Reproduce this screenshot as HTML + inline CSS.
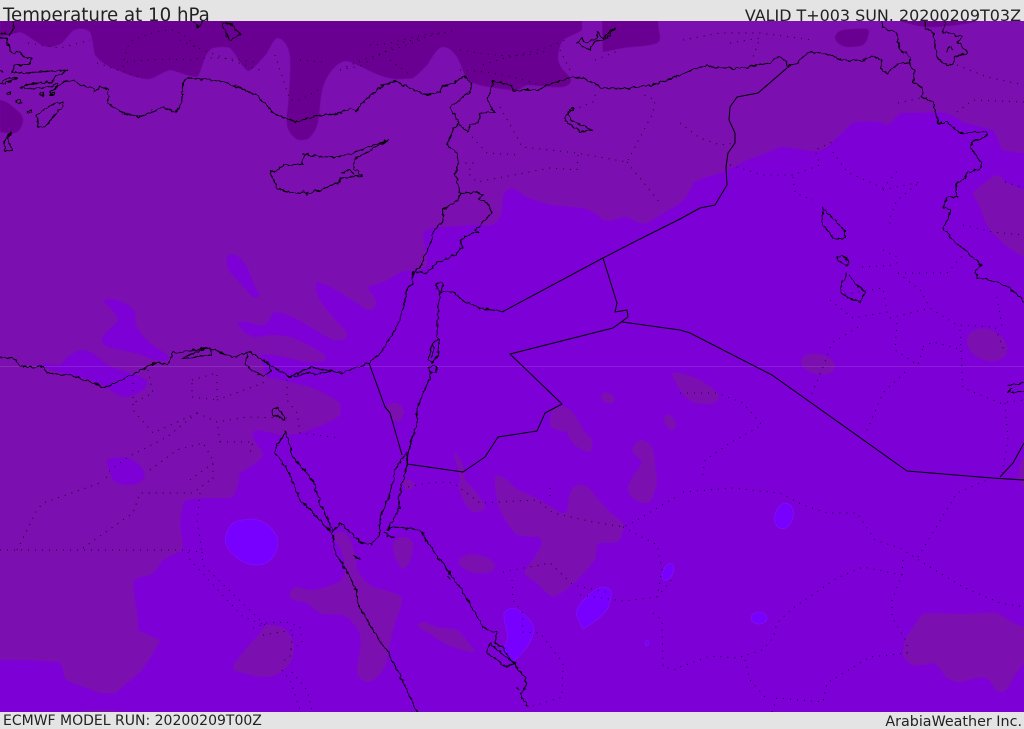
<!DOCTYPE html>
<html><head><meta charset="utf-8"><title>Temperature at 10 hPa</title>
<style>
html,body{margin:0;padding:0;background:#e4e4e4;width:1024px;height:729px;overflow:hidden}
svg{display:block}
text{font-family:"DejaVu Sans",sans-serif;fill:#222}
</style></head><body>
<svg width="1024" height="729" viewBox="0 0 1024 729" xmlns="http://www.w3.org/2000/svg">
<defs><filter id="w" x="-5%" y="-5%" width="110%" height="110%"><feTurbulence type="fractalNoise" baseFrequency="0.22" numOctaves="2" seed="4"/><feDisplacementMap in="SourceGraphic" scale="4.5" xChannelSelector="R" yChannelSelector="G"/></filter></defs>
<rect width="1024" height="729" fill="#e4e4e4"/>
<text x="3" y="21" font-size="18.2">Temperature at 10 hPa</text>
<text x="1021" y="21" font-size="15.95" text-anchor="end">VALID T+003 SUN. 20200209T03Z</text>
<text x="3" y="725" font-size="14">ECMWF MODEL RUN: 20200209T00Z</text>
<text x="1022" y="726" font-size="14.3" text-anchor="end">ArabiaWeather Inc.</text>
<svg x="0" y="21" width="1024" height="691" viewBox="0 21 1024 691">
<rect x="0" y="21" width="1024" height="691" fill="#7d00d7"/>
<!-- light purple -->
<g fill="#7b0faf" stroke="#7f0cbe" stroke-width=".6">
<path d="M0 21H1024V153L1002 150C998 140 996 133 993 130L963 122C955 116 948 113 940 112L900 113C895 118 892 123 887 125C882 122 878 121 873 121L853 122C848 128 843 132 837 137C830 147 822 151 813 151C802 150 790 146 780 147C770 151 758 157 747 160L723 172C712 176 700 178 693 183C690 190 688 196 680 203L657 217C650 222 645 224 640 223C634 221 628 216 623 217C617 219 610 222 603 220C596 212 590 210 583 208C570 206 556 206 547 204C540 202 533 199 527 197C520 193 515 187 510 188C504 192 503 195 503 197C502 205 502 212 500 217C497 222 494 225 490 225H473L440 227C432 228 426 229 423 233C424 245 427 255 427 265C424 270 418 270 413 270L400 272C394 276 387 281 380 283C374 285 369 285 368 288C369 292 376 297 376 303C375 308 373 310 370 310C365 310 361 306 357 303L340 292C333 288 322 282 317 282C314 286 317 292 318 297C322 305 329 312 335 320C341 327 347 330 347 335C347 340 342 340 333 340C318 332 305 323 293 317C285 314 278 311 273 312C270 318 269 324 263 325C255 325 245 320 237 322C240 329 247 335 253 337C260 338 266 335 273 335C281 335 287 337 293 338C302 342 311 346 317 350C322 353 327 356 325 360C315 364 302 362 290 358C280 356 268 353 260 355C262 362 264 370 267 377C280 380 295 383 310 387C320 391 330 396 340 403V415C330 423 312 429 300 433L287 435C278 436 266 430 257 430C253 431 252 432 253 437C255 443 260 448 263 453C262 460 250 467 240 473C238 482 238 494 230 498H200C190 499 185 500 183 503C182 510 180 516 180 523C180 532 183 541 183 550C177 553 170 555 163 560C158 566 156 571 153 573C148 576 140 577 137 578C133 581 133 584 133 587C134 596 136 604 137 613L138 630C143 634 153 636 160 640C155 650 148 662 140 672L115 693H100L66 680C63 675 64 667 60 662L30 660H0Z"/>
<path d="M1024 190L1005 182C1002 178 1000 175 997 175C990 178 982 184 973 193C975 198 980 205 982 213C985 222 988 228 993 233C1000 240 1010 250 1024 257Z"/>
<path d="M290 593C293 588 295 587 297 587C302 588 306 590 310 590C320 590 330 586 340 582C344 578 346 572 345 565C344 558 342 553 340 548C338 544 333 538 335 534C340 531 345 532 347 535C352 540 355 552 357 570C362 578 367 584 373 587C380 590 388 590 393 593C398 594 402 596 402 600C401 608 399 612 397 617C394 625 392 634 390 643C388 652 387 660 385 667C380 675 373 682 367 682C360 680 357 675 357 670C358 660 361 650 361 640C360 632 357 626 353 623C349 618 345 616 340 614C334 614 327 615 320 613C315 610 311 606 307 603C302 600 297 602 293 600C290 597 289 595 290 593Z"/>
<path d="M233 667C238 658 248 646 257 637C260 633 263 627 267 625C274 625 280 626 283 628C288 632 292 637 293 643C294 650 293 658 290 663C285 670 275 677 267 677C258 677 248 674 240 672C236 671 233 670 233 667Z"/>
<path d="M393 543C395 539 399 537 403 537C409 537 413 541 413 545C413 550 412 555 410 560C408 565 405 569 402 569C399 565 397 561 395 557C394 552 393 547 393 543Z"/>
<path d="M418 625C420 622 421 622 423 622C428 623 434 627 440 628C446 629 452 628 457 630C464 636 470 645 475 652C468 652 460 649 453 647C445 644 435 637 427 632C423 630 419 628 418 625Z"/>
<ellipse cx="477" cy="564" rx="18" ry="9" transform="rotate(10 477 564)"/>
<path d="M455 453C458 455 462 462 463 467C464 472 465 476 465 480C468 483 470 485 472 487C478 494 483 501 486 508C482 511 477 512 473 512C467 508 464 502 462 497C460 492 458 486 460 480C460 475 458 468 456 462C455 459 454 456 455 453Z"/>
<path d="M495 480C495 477 496 475 497 475C501 476 504 478 507 480C512 485 517 490 523 492C536 498 550 505 560 513C565 514 568 512 568 507C568 502 569 497 570 493C572 488 576 485 580 485C586 485 590 488 593 493C602 505 612 515 623 523C624 531 622 537 617 542C610 543 604 542 598 543C596 548 596 554 595 560C585 572 570 590 553 597C547 594 542 588 537 583C532 579 527 577 524 573C528 565 538 555 542 543C542 539 540 537 537 537L517 535C510 528 505 520 500 510C497 502 495 490 495 480Z"/>
<path d="M633 447C636 442 639 440 642 440C647 441 651 445 653 450C655 456 655 462 655 467C655 472 657 475 657 478C657 483 656 487 655 490C653 497 650 502 647 503C642 503 637 501 633 498C630 495 628 491 628 488C629 483 631 481 632 478C635 473 640 469 642 463C641 459 636 456 633 453Z"/>
<path d="M562 406C566 407 570 410 573 413C577 418 580 424 583 430C586 434 590 437 592 440C593 444 592 448 590 452C585 452 578 448 573 443C570 439 568 435 567 432C562 431 557 430 553 428C551 427 550 425 550 423C550 418 551 413 552 410Z"/>
<path d="M387 405C391 403 394 403 397 403C400 405 403 408 404 412C403 416 401 420 398 422C394 422 392 419 390 415C388 412 387 408 387 405Z"/>
<path d="M402 480H410C413 481 414 485 413 487C411 490 407 490 405 489Z"/>
<ellipse cx="608" cy="398" rx="7" ry="5" transform="rotate(25 608 398)"/>
<ellipse cx="670" cy="422" rx="5" ry="8" transform="rotate(-30 670 422)"/>
<path d="M672 373L680 373C688 375 694 377 700 380C707 384 714 389 719 395C719 399 717 402 713 403C706 404 699 404 693 402C687 399 683 395 680 390C677 385 674 379 672 373Z"/>
<ellipse cx="818" cy="364" rx="17" ry="10" transform="rotate(12 818 364)"/>
<ellipse cx="987" cy="345" rx="21" ry="15" transform="rotate(25 987 345)"/>
<path d="M903 653C904 646 904 642 907 637C910 631 915 626 918 620C921 615 923 613 927 613C936 613 948 614 957 614C970 615 985 612 997 613C1005 617 1012 624 1024 627V662C1020 668 1015 674 1012 680C1010 686 1006 692 1000 692C995 691 993 687 992 683C990 680 987 677 983 677C975 677 965 682 957 682C951 681 946 677 943 673C940 668 937 664 933 663C926 664 919 666 913 665C908 663 903 658 903 653Z"/>
<path d="M1024 455L1020 465L1019 475L1022 486L1024 487Z"/>
<ellipse cx="100" cy="712" rx="20" ry="2"/>
<ellipse cx="403" cy="712" rx="6" ry="1"/>
</g>
<!-- bright holes -->
<g fill="#7d00d7" stroke="#7d08c5" stroke-width=".6">
<path d="M227 257C228 255 231 254 233 254C239 256 243 261 247 267C251 276 254 287 260 295C258 297 255 298 253 297C246 290 238 280 230 272C227 267 226 262 227 257Z"/>
<path d="M103 300C107 299 112 299 117 300C124 302 131 306 135 312C136 316 135 319 135 323C138 331 144 338 150 343C157 349 166 353 170 358C165 362 158 361 147 357C135 352 122 350 110 348C105 346 101 342 102 338C105 331 115 326 118 320C118 314 107 306 103 300Z"/>
<path d="M38 365L47 364C52 365 56 366 60 365C67 357 75 350 83 350C91 350 99 358 107 365C118 370 135 373 147 380C147 386 144 390 140 392C135 395 129 397 123 397C117 395 110 390 105 387L90 380C80 377 72 375 60 372C52 370 44 368 38 365Z"/>
<path d="M107 460C113 457 120 457 127 458C135 460 140 465 143 470C145 473 145 477 143 480C139 483 133 485 127 485C121 485 116 483 113 480C110 474 108 467 107 460Z"/>
</g>
<!-- dark purple -->
<g fill="#6a0091" stroke="#710a9c" stroke-width=".6">
<path d="M0 21V37L20 32C27 34 31 39 37 42C41 45 45 47 50 47C54 47 58 45 62 43C67 38 71 30 77 29C82 28 87 29 90 32C93 38 93 48 95 55C99 60 104 64 110 67C122 72 135 78 147 79C155 79 163 71 170 70C178 71 188 77 197 77C200 74 201 69 203 63C205 56 208 50 213 48C218 47 225 46 230 48C236 53 241 67 248 71C253 70 261 60 267 53C271 46 274 38 278 38C284 39 289 47 290 57C291 73 289 90 288 107C287 113 286 120 287 125C288 132 295 140 300 140C304 140 308 140 310 137C314 133 317 127 318 122C320 110 320 97 323 87C326 77 332 68 340 63C344 60 349 61 353 63C367 69 381 78 395 79C402 79 409 79 413 78C419 74 423 69 427 65C432 58 437 47 443 47C448 47 453 51 457 57C461 63 463 74 468 80C474 84 482 86 490 87C499 88 508 91 517 90C521 89 523 86 527 85C538 85 551 88 563 87C567 86 571 84 571 80C569 75 566 73 563 70C560 66 558 62 558 58C558 52 560 45 563 40C568 36 577 34 582 30V21Z"/>
<path d="M602 21L603 52C610 51 616 49 623 48C634 46 647 47 657 43C660 41 660 39 660 37C659 31 658 26 658 21Z"/>
<path d="M900 21C910 24 920 27 930 27C945 27 965 24 980 21Z"/>
<path d="M835 37C836 33 839 31 843 30C851 29 860 28 867 29C869 30 869 31 869 33C868 38 866 43 863 45C858 47 852 47 847 47C841 46 835 42 835 37Z"/>
<path d="M0 100C5 101 9 103 13 107C18 111 23 115 23 120C23 125 20 130 17 132C12 134 9 134 7 133C4 133 2 132 0 132Z"/>
</g>
<!-- bright blue -->
<g fill="#7800ff" stroke="#8015f0" stroke-width=".6">
<path d="M225 540C226 533 229 527 233 523C239 520 247 519 253 519C260 520 266 523 270 527C275 532 278 537 278 542C278 548 276 553 273 557C268 563 263 565 257 565C251 565 245 563 240 560C233 555 226 548 225 540Z"/>
<path d="M504 613C507 609 510 608 513 608C518 609 523 613 527 617C531 621 534 626 534 630C533 637 530 642 527 647C523 652 518 658 513 662C510 660 505 657 503 653C503 647 507 643 508 637C507 628 503 620 504 613Z"/>
<path d="M576 613C578 606 582 601 587 597C592 592 598 587 603 587C607 587 611 589 611 592C612 597 610 603 608 608C603 616 592 624 583 629C581 625 577 619 576 613Z"/>
<ellipse cx="784" cy="516" rx="9" ry="13" transform="rotate(15 784 516)"/>
<ellipse cx="668" cy="572" rx="5" ry="9" transform="rotate(25 668 572)"/>
<ellipse cx="759" cy="618" rx="8" ry="6"/>
<ellipse cx="647" cy="643" rx="1.5" ry="3"/>
</g>
<rect x="0" y="366" width="1024" height="1" fill="#fff" opacity=".11"/>
<!-- dotted admin boundaries -->
<g fill="none" stroke="#000" stroke-width="1" stroke-dasharray="1 6" opacity=".8">
<path d="M28 43L60 48L90 40M97 63L140 77M123 67C125 55 127 48 130 42C145 34 160 30 173 30C185 34 192 42 197 50M127 62C145 60 170 58 190 60C210 55 240 60 255 62M180 40C200 50 230 60 260 70M275 55L290 100L300 100L318 90M300 60L322 62M370 45C395 45 410 35 440 33M340 70C370 55 395 50 420 40M390 60L410 75M460 50C490 55 520 60 550 50M483 65C510 55 540 52 565 40M460 70C490 72 510 75 540 85M560 50L570 70M595 60L620 50"/>
<path d="M340 70L360 66L400 43L455 30M500 107L517 137L522 147L577 153L627 162L653 113L655 100L640 93M472 137L487 153L520 155M627 162L660 203M578 155L577 170L550 168L477 182L468 173L473 163L458 163M573 110L593 102L597 90"/>
<path d="M683 40L720 33L760 33L813 40M730 43L760 38L753 57M680 123L700 138L720 145L735 143M730 165L763 175L793 175L820 165L815 150L837 140M833 152L847 172L883 188L898 170M793 177L795 193L813 200M883 190L920 182L897 200L890 217L890 227M898 103L920 98M957 112L973 100L1024 102M957 65L987 77L1024 85M1005 182L1024 188M963 225L993 232L1024 235"/>
<path d="M830 300L853 318L887 312L883 288L840 295M890 318L930 308L957 325L995 327L1005 353M960 330L962 373L963 388L1000 403L1024 400M923 347L933 342L963 350M897 323L895 350L918 365L923 347M905 372L883 393L865 435M858 327L832 343L823 367L810 398M680 393L717 393L743 403L762 425L730 443L705 460L702 480M1005 403L1008 440L1002 473M898 273L947 273L963 255M862 267L897 265M898 273L920 290L930 308M997 297L1002 327M883 250L897 257V267"/>
<path d="M148 370L153 393L133 403M192 380L217 373V400L192 397ZM197 413L217 422L247 417L287 418M217 400L263 383L267 377M287 380V400L297 413L300 433L340 438M220 442H253L250 453M197 413L167 437L128 457L110 470L105 480M150 470L177 450L203 443L213 460V480M133 383V410L153 433L197 413M220 442L217 422M190 480L213 463"/>
<path d="M0 550H183L202 552M17 550L37 510L43 503L100 483M83 548L133 513L140 493H193L210 480M200 493L197 520L202 552M188 552L190 560L243 617L265 625M202 552L203 565L265 625M253 628L267 623L287 622L300 627L302 643L290 650M263 635L293 630L290 657L280 663M282 670L290 680L300 710M292 672L307 690L312 710"/>
<path d="M408 487C425 483 440 481 453 483L480 503L537 500L553 513L593 522L623 527C640 520 660 505 680 495M623 527L657 545L662 570L657 597L623 601L580 595M550 488V500M503 572L550 563L573 585L610 593M512 580L513 600L523 613L522 632L540 633L563 663L562 697L530 707M653 613L662 620L663 667L677 670M657 597L673 578"/>
<path d="M683 492L733 488L780 493L803 505L827 513L857 513L875 540L900 548L930 567L963 587L1000 603L1024 607M918 557L957 493L987 480M903 560L902 575L892 600V617L907 643V653L870 657L827 683L823 702L777 698L772 712M902 575L863 567L837 578L793 608L777 623L773 638L762 650L737 658L710 656L680 667M745 660L750 680L765 697"/>
</g>
<!-- straight borders -->
<g fill="none" stroke="#000" stroke-width="1" stroke-linejoin="round">
<path d="M787 68L758 93L737 97L730 107L729 120L735 133L735 143L728 153L726 167L727 185L715 205L700 208L680 219L638 240L603 258L502 312"/>
<path d="M408 453L407 464L463 472L485 457L498 437L537 431L545 413L562 404L510 354L613 328L628 317L627 310L615 312L617 303L603 258"/>
<path d="M622 322L680 330L690 333L772 375L907 471L992 478L1024 480M1000 477L1013 463L1024 443"/>
<path d="M369 363L385 407L390 413L402 455"/>
</g>
<!-- coastlines (wiggly) -->
<g fill="none" stroke="#000" stroke-width="1.05" stroke-linejoin="round" filter="url(#w)">
<path d="M13 21L14 28L10 35L2 32L0 33M0 38L7 40L11 53L20 52L25 58L32 58L30 65L15 65L12 73L23 73L68 70L55 77L53 82L33 83L20 88L33 89L50 87L57 83L57 88L50 92L63 82L73 80L82 86L93 88L95 92L100 86L108 90L108 103L120 112L132 115L140 117L163 107L175 112L180 106L183 95L183 82L188 78L220 81L240 88L257 95L273 113L295 122L313 117L340 113L350 108L356 112L363 102L383 85L395 81L405 86L427 95L440 92L442 87L455 82L463 76L472 83L470 92L450 107L459 123L453 130L447 145L457 153L458 163L455 173L460 193L458 200L443 210L442 223L433 232L432 240L420 267L413 272L412 285L407 287L403 310L397 327L383 350L369 363L340 373L312 367L290 377L270 365L250 352L232 357L208 348L172 353L168 365L157 362L105 388L90 382L70 375L47 373L43 367L20 367L15 359L0 357"/>
<path d="M182 358L195 352L210 348L211 355L190 358ZM248 353L245 365L257 373L263 376L271 372L270 365M293 377L310 372L315 375L328 372"/>
<path d="M270 170L275 173L283 165L302 165L304 154L328 157L340 157L353 153L388 140L355 159L353 167L363 176L350 177L340 178L340 182L320 190L307 193L290 193L277 188L272 177Z"/>
<path d="M303 190L307 195L309 191M342 173L350 170L354 175"/>
<path d="M63 102L50 105L37 115L38 127L45 127L62 107ZM10 133L4 142L5 152L12 150L8 140ZM40 93L44 92L44 96L40 95ZM50 93H54V95H50ZM7 92H10V94H7ZM16 100L20 100L22 103L16 102ZM27 110H32V112H27ZM0 83L7 78L18 78L5 83ZM0 70L3 73M193 21L198 28L203 21M222 23H230L240 35L230 41L222 25Z"/>
<path d="M577 42L582 38L585 43L597 38L597 32L603 38L615 27L607 38L595 42L590 50L580 45Z"/>
<path d="M459 125L468 132L470 125L478 123L480 113L495 112L490 107L488 100L493 81L512 85L513 91L523 90L537 90L547 85L572 77L583 78L602 88L623 89L653 85L680 75L703 66L725 68L742 68L770 63L778 56L786 60L787 67L797 64L807 53L823 53L843 60L860 61L872 56L882 60L880 68L887 73L900 63L910 63L910 68L915 70L913 82L923 88L922 97L933 102L938 123L947 122L960 133L987 132L988 135L972 142L972 150L982 163L980 170L967 172L965 178L957 183L957 197L947 197L943 207L950 210L948 220L942 227L953 240L967 252L982 265L975 272L978 279L990 280L1010 288L1024 302"/>
<path d="M882 21L883 28L897 33L900 50L910 57L910 63M924 21L925 28L933 32L937 57L947 66L953 63L955 57L968 53L958 42L962 37L943 32L945 22M950 47L953 50M946 52L949 47"/>
<path d="M502 312L480 308L465 302L453 292L440 292L438 307L437 337L439 340"/>
<path d="M415 272L427 273L437 263L455 255L462 247L460 240L473 233L480 233L475 230L492 213L487 203L478 200L483 195L476 192L460 193"/>
<path d="M437 340L431 347L429 360L432 363L438 355L439 340ZM428 368L432 373L436 373L437 368L433 365ZM434 342L432 358"/>
<ellipse cx="439.500" cy="287" rx="3.500" ry="4.500"/>
<path d="M432 373L417 407L417 423L408 453"/>
<path d="M285 430L283 437L275 447L275 453L288 470L300 500L320 520L333 535L335 553L340 560L350 577L357 593L357 602L373 630L387 650L407 690L417 712"/>
<path d="M285 430L293 457L313 480L320 503L333 532L340 523L360 542L372 545L380 533L380 517L390 493L393 480L395 470L403 457L408 453"/>
<path d="M408 455L407 467L403 480L398 500L400 507L390 525L388 530L393 527L420 530L435 553L450 573L463 592L483 627L497 633L495 643L503 648L515 665L525 677L526 688L520 695L528 706"/>
<path d="M490 643L487 653L507 667L515 663L503 655ZM355 557L360 560M353 556L360 558"/>
<path d="M384 533L388 536L395 537M448 577L450 579M517 688L519 689"/>
<path d="M823 208L822 223L833 238L845 238L845 230L827 213ZM837 257L842 255L849 262L847 267L837 260ZM846 272L847 275L842 282L841 293L853 300L860 302L865 292L855 283L850 275"/>
<path d="M573 107L565 117L568 123L580 132L592 130L585 126L573 122L568 115L573 110Z"/>
<path d="M1008 385L1024 383M1024 392L1008 392L1012 388"/>
<path d="M272 410L278 408L283 415L285 420L280 417L273 416Z"/>
</g>
</svg>
</svg>
</body></html>
